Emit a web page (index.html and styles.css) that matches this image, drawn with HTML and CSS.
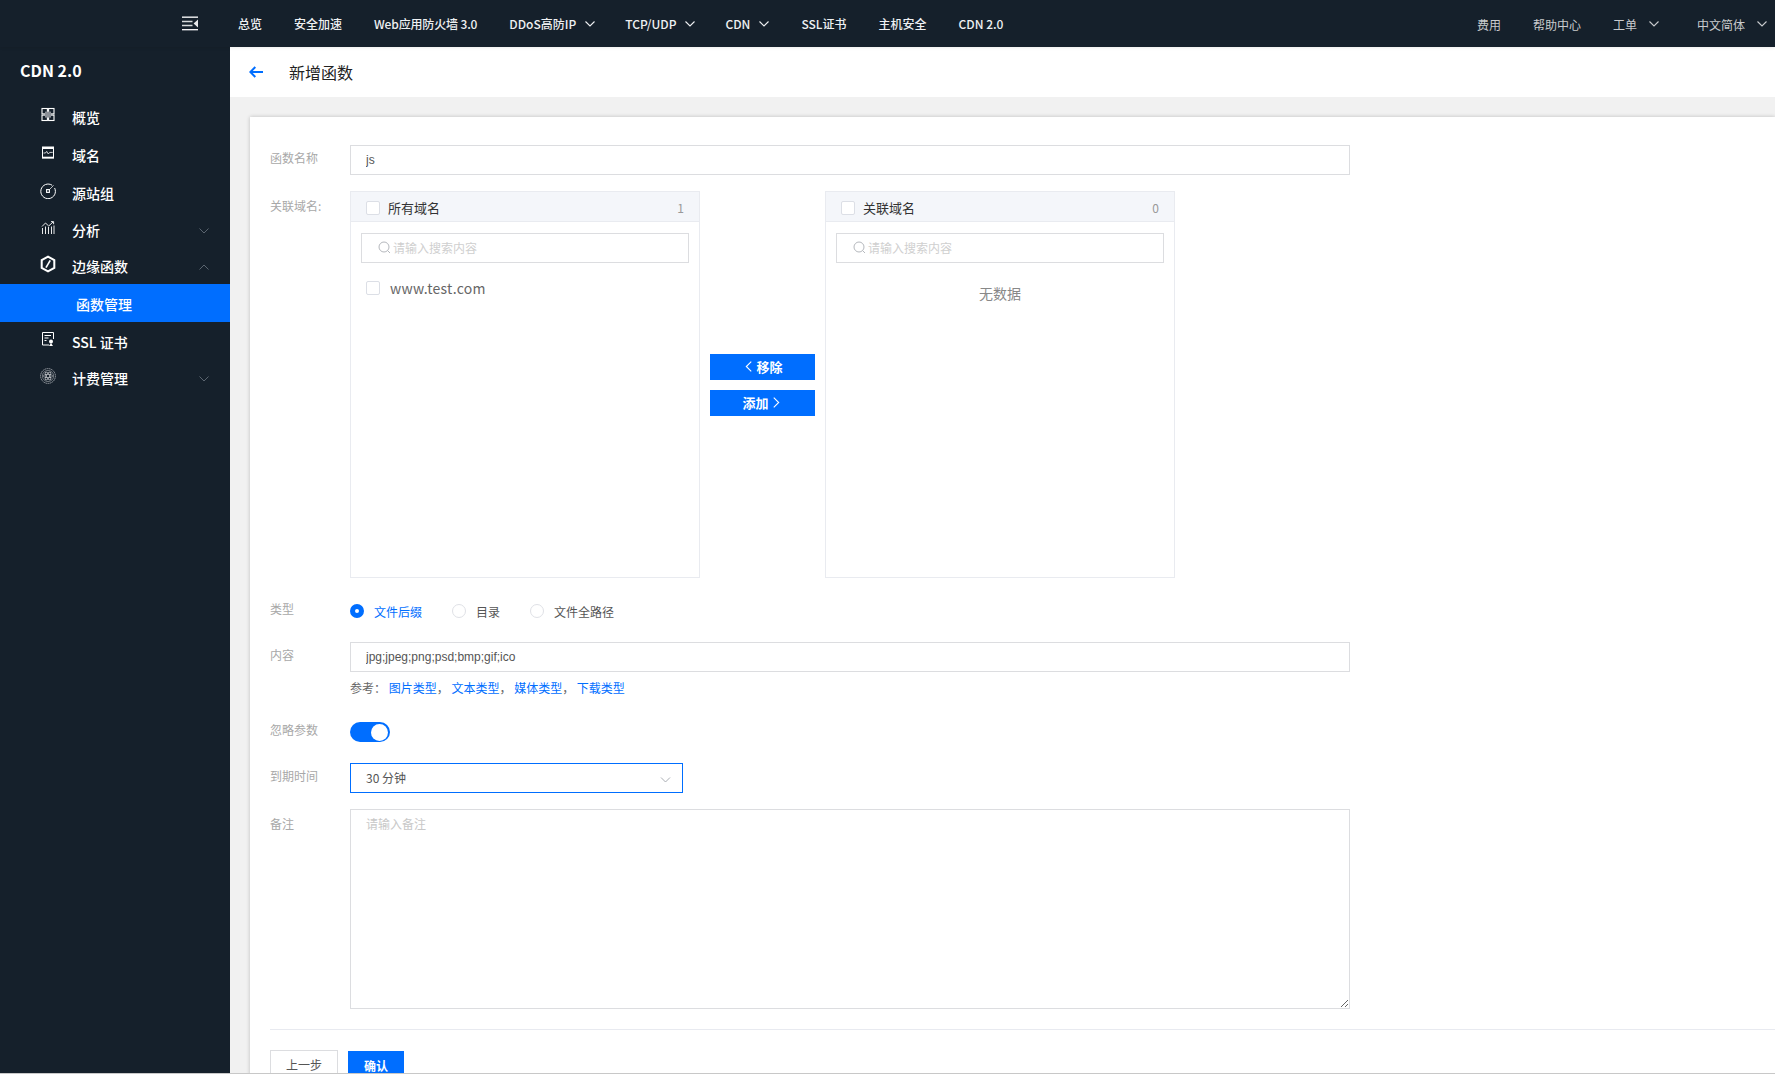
FILE: index.html
```html
<!doctype html>
<html lang="zh-CN">
<head>
  <meta charset="UTF-8">
  <title>新增函数</title>
  <link rel="stylesheet" href="styles.css">
</head>
<body>
  <div class="app">
    <header class="topbar">
      <div class="topbar-toggle">
        <svg width="16" height="15" viewBox="0 0 16 15" fill="none" stroke="#d8dadc"><path d="M0 1.2h16" stroke-width="1.6"/><path d="M0 5.5h10.5M0 9.5h10.5" stroke-width="1.3"/><path d="M0 13.7h16" stroke-width="1.3" stroke="#fff"/><path d="M16 3.6v7.8L11.6 7.5z" fill="#e8e9eb" stroke="none"/></svg>
      </div>
      <nav class="topnav">
        <a>总览</a>
        <a>安全加速</a>
        <a class="tight">Web应用防火墙 3.0</a>
        <a>DDoS高防IP<svg class="caret" viewBox="0 0 10 6"><path d="M.5.5 5 5 9.5.5"/></svg></a>
        <a>TCP/UDP<svg class="caret" viewBox="0 0 10 6"><path d="M.5.5 5 5 9.5.5"/></svg></a>
        <a class="nav-cdn">CDN<svg class="caret" viewBox="0 0 10 6"><path d="M.5.5 5 5 9.5.5"/></svg></a>
        <a>SSL证书</a>
        <a>主机安全</a>
        <a>CDN 2.0</a>
      </nav>
      <nav class="topnav-right">
        <a>费用</a>
        <a>帮助中心</a>
        <a class="wide">工单<svg class="caret" viewBox="0 0 10 6"><path d="M.5.5 5 5 9.5.5"/></svg></a>
        <a>中文简体<svg class="caret" viewBox="0 0 10 6"><path d="M.5.5 5 5 9.5.5"/></svg></a>
      </nav>
    </header>

    <div class="body-wrap">
      <aside class="sidebar">
        <div class="side-title">CDN 2.0</div>
        <ul class="side-menu">
          <li class="side-item">
            <svg class="side-icon" viewBox="0 0 16 16" fill="none" stroke="#fff" stroke-width="1.1"><rect x="2" y="1.5" width="5.4" height="5.4"/><rect x="8.6" y="1.5" width="5.4" height="5.4"/><rect x="2" y="8.1" width="5.4" height="5.4"/><rect x="8.6" y="8.1" width="5.4" height="5.4"/><rect x="5" y="4.6" width="6" height="6" fill="#8a8f96" stroke="none"/></svg>
            <span>概览</span>
          </li>
          <li class="side-item">
            <svg class="side-icon" viewBox="0 0 16 16" fill="none" stroke="#fff"><rect x="2.5" y="2" width="11" height="11" stroke-width="1"/><path d="M2 3h12" stroke-width="2"/><path d="M2 12.5h12" stroke-width="1.6"/><path d="M3.5 8h2l1.2-1.6 1.6 2.6 1.4-1.6h3" stroke-width=".8"/></svg>
            <span>域名</span>
          </li>
          <li class="side-item">
            <svg class="side-icon" viewBox="0 0 16 16" fill="none" stroke="#fff" stroke-width="1"><path d="M12.2 2.3A7.3 7.3 0 1 0 14.6 5"/><rect x="6.6" y="6.6" width="2.8" height="2.8" stroke-width="1.1"/><path d="M9.4 6.6 13.6 2.4" stroke-width=".7"/></svg>
            <span>源站组</span>
          </li>
          <li class="side-item side-sub">
            <svg class="side-icon" viewBox="0 0 16 16" fill="none" stroke="#fff" stroke-width=".9"><path d="M2.5 14V8M5.5 14V6.5M8.5 14V7M11.5 14V6.5M14 14V5.5"/><path d="M2 6.5 5.5 3l3.2 3L13 2"/><path d="M11 1.6h2.6v2.6"/></svg>
            <span>分析</span>
            <svg class="side-caret" viewBox="0 0 10 6"><path d="M.5.5 5 5 9.5.5"/></svg>
          </li>
          <li class="side-item side-sub">
            <svg class="side-icon side-icon-big" viewBox="0 0 16 16" fill="none" stroke="#fff"><path d="M8 1.4 13.6 4.6v6.8L8 14.6 2.4 11.4V4.6z" stroke-width="1.8"/><path d="M10 4.8 6.2 11.2" stroke-width="1.5"/></svg>
            <span>边缘函数</span>
            <svg class="side-caret" viewBox="0 0 10 6"><path d="M.5 5.5 5 1l4.5 4.5"/></svg>
          </li>
          <li class="side-child">函数管理</li>
          <li class="side-item side-cert">
            <svg class="side-icon" viewBox="0 0 16 16" fill="none" stroke="#fff" stroke-width="1"><path d="M9 14H2.5V1.5h11V8"/><path d="M4.5 4.5h6.5M4.5 7h4M4.5 9.5h2"/><circle cx="11" cy="10.5" r="2" fill="#fff" stroke="none"/><path d="M9 15l2-3 2 3z" fill="#fff" stroke="none"/></svg>
            <span>SSL 证书</span>
          </li>
          <li class="side-item side-sub">
            <svg class="side-icon" viewBox="0 0 16 16" fill="none" stroke="#c6c9cd" stroke-width=".7"><circle cx="8" cy="8" r="7.4" stroke-dasharray="1.6 .5"/><circle cx="8" cy="8" r="5.6" stroke-width=".5"/><ellipse cx="8" cy="8" rx="4.6" ry="1.7"/><ellipse cx="8" cy="8" rx="4.6" ry="1.7" transform="rotate(60 8 8)"/><ellipse cx="8" cy="8" rx="4.6" ry="1.7" transform="rotate(120 8 8)"/></svg>
            <span>计费管理</span>
            <svg class="side-caret" viewBox="0 0 10 6"><path d="M.5.5 5 5 9.5.5"/></svg>
          </li>
        </ul>
      </aside>

      <main class="main">
        <div class="page-head">
          <svg class="back-arrow" width="14" height="12" viewBox="0 0 14 12" fill="none" stroke="#006eff" stroke-width="2"><path d="M14 6H1.5M6.3 1 1.3 6l5 5"/></svg>
          <h1>新增函数</h1>
        </div>
        <div class="card">
          <div class="form-row">
            <label class="form-label">函数名称</label>
            <input class="text-input" type="text" value="js">
          </div>

          <div class="form-row transfer-row">
            <label class="form-label label-low">关联域名:</label>
            <div class="transfer">
              <div class="panel">
                <div class="panel-head">
                  <span class="check"></span>
                  <span class="panel-title">所有域名</span>
                  <span class="panel-count">1</span>
                </div>
                <div class="panel-search">
                  <svg width="13" height="13" viewBox="0 0 13 13" fill="none" stroke="#b5b8bd"><circle cx="6" cy="6" r="5"/><path d="M9.6 9.6 12 12"/></svg>
                  <span>请输入搜索内容</span>
                </div>
                <div class="panel-item">
                  <span class="check"></span>
                  <span class="item-text">www.test.com</span>
                </div>
              </div>
              <div class="transfer-actions">
                <button class="btn-move btn-left"><svg class="move-arrow" viewBox="0 0 6 10"><path d="M5.5.5 1 5l4.5 4.5"/></svg>移除</button>
                <button class="btn-move btn-right">添加<svg class="move-arrow" viewBox="0 0 6 10"><path d="M.5.5 5 5 .5 9.5"/></svg></button>
              </div>
              <div class="panel">
                <div class="panel-head">
                  <span class="check"></span>
                  <span class="panel-title">关联域名</span>
                  <span class="panel-count">0</span>
                </div>
                <div class="panel-search">
                  <svg width="13" height="13" viewBox="0 0 13 13" fill="none" stroke="#b5b8bd"><circle cx="6" cy="6" r="5"/><path d="M9.6 9.6 12 12"/></svg>
                  <span>请输入搜索内容</span>
                </div>
                <div class="panel-empty">无数据</div>
              </div>
            </div>
          </div>

          <div class="form-row radio-row">
            <label class="form-label label-high">类型</label>
            <div class="radios">
              <span class="radio-opt active"><i class="radio"></i>文件后缀</span>
              <span class="radio-opt"><i class="radio"></i>目录</span>
              <span class="radio-opt"><i class="radio"></i>文件全路径</span>
            </div>
          </div>

          <div class="form-row content-row">
            <label class="form-label">内容</label>
            <div class="content-field">
              <input class="text-input" type="text" value="jpg;jpeg;png;psd;bmp;gif;ico">
              <p class="hint">参考： <a>图片类型</a>， <a>文本类型</a>， <a>媒体类型</a>， <a>下载类型</a></p>
            </div>
          </div>

          <div class="form-row toggle-row">
            <label class="form-label label-toggle">忽略参数</label>
            <span class="toggle"><i></i></span>
          </div>

          <div class="form-row">
            <label class="form-label">到期时间</label>
            <div class="select">
              <span>30 分钟</span>
              <svg width="11" height="6" viewBox="0 0 10 6" fill="none" stroke="#a9adb3"><path d="M.5.5 5 5 9.5.5"/></svg>
            </div>
          </div>

          <div class="form-row note-row">
            <label class="form-label label-low">备注</label>
            <textarea class="note" placeholder="请输入备注"></textarea>
          </div>

          <div class="form-foot">
            <button class="btn-plain">上一步</button>
            <button class="btn-primary">确认</button>
          </div>
        </div>
      </main>
    </div>
  </div>
</body>
</html>
```
FILE: styles.css
```css
* {
    box-sizing: border-box;
}
html, body {
    margin: 0;
    height: 100%;
    overflow: hidden;
    background-color: #fff;
}
body {
    font-family: "Noto Sans CJK SC", "Noto Sans", sans-serif;
    font-size: 12px;
    color: #444;
}
.app {
    height: 1074px;
    display: flex;
    flex-direction: column;
    border-bottom: 1px solid #c8c8c8;
    overflow: hidden;
}

/* top bar */
.topbar {
    flex: none;
    height: 47px;
    background-color: #15202b;
    display: flex;
    align-items: center;
    position: relative;
    z-index: 2;
    box-shadow: 0 1px 3px rgba(0,0,0,0.08);
}
.topbar-toggle {
    width: 238px;
    padding-left: 182px;
    display: flex;
    margin-top: -1px;
}
.topnav {
    display: flex;
    gap: 32px;
    font-weight: 500;
    color: #eef0f2;
}
.topnav a, .topnav-right a {
    display: flex;
    align-items: center;
    white-space: nowrap;
}
.topnav a.tight {
    letter-spacing: -0.15px;
}
.caret {
    width: 10px;
    height: 6px;
    margin-left: 9px;
    fill: none;
    stroke: currentColor;
    stroke-width: 1.1;
}
.topnav .caret {
    margin-right: -2px;
}
.topnav .nav-cdn .caret {
    margin-right: 0;
}
.topnav-right {
    margin-left: auto;
    display: flex;
    gap: 32px;
    color: #c9cbce;
    padding-right: 8px;
    margin-top: 2px;
}
.topnav-right a.wide {
    margin-right: 6px;
}
.topnav-right .caret {
    margin-left: 12px;
    margin-top: -2px;
}

.body-wrap {
    flex: 1;
    min-height: 0;
    display: flex;
}

/* sidebar */
.sidebar {
    flex: none;
    width: 230px;
    background-color: #15202b;
    color: #fff;
}
.side-title {
    padding-left: 20px;
    font-size: 16px;
    font-weight: 700;
    line-height: 24px;
    margin-top: 11px;
}
.side-menu {
    list-style: none;
    margin: 16px 0 0;
    padding: 0;
    font-size: 14px;
    font-weight: 500;
}
.side-item {
    position: relative;
    height: 38px;
    display: flex;
    align-items: center;
    padding-left: 72px;
}
.side-sub {
    height: 36px;
}
.side-cert {
    padding-top: 2px;
}
.side-icon {
    position: absolute;
    left: 40px;
    top: 50%;
    width: 16px;
    height: 16px;
    margin-top: -10px;
}
.side-icon-big {
    left: 39px;
    width: 18px;
    height: 18px;
    margin-top: -11px;
}
.side-caret {
    position: absolute;
    right: 21px;
    top: 50%;
    margin-top: -2px;
    width: 10px;
    height: 6px;
    fill: none;
    stroke: #5b6570;
    stroke-width: 1;
}
.side-child {
    height: 38px;
    line-height: 38px;
    padding: 1px 0 0 76px;
    background-color: #006eff;
}

/* main area */
.main {
    flex: 1;
    min-width: 0;
    background-color: #f1f1f1;
    overflow: hidden;
}
.page-head {
    height: 50px;
    background-color: #fff;
    display: flex;
    align-items: center;
    padding-left: 19px;
}
.page-head h1 {
    margin: 0 0 0 26px;
    font-size: 16px;
    font-weight: 400;
    color: #222;
}
.card {
    margin: 20px 0 0 20px;
    background-color: #fff;
    padding: 28px 0 0 20px;
    height: 1000px;
    box-shadow: 0 0 4px rgba(0,0,0,0.22);
}

/* form */
.form-row {
    display: flex;
    align-items: flex-start;
    margin-bottom: 16px;
}
.form-label {
    flex: none;
    width: 80px;
    line-height: 26px;
    color: #a8a8a8;
}
.label-low {
    line-height: 30px;
}
.label-high {
    line-height: 24px;
}
.label-toggle {
    line-height: 16px;
}
.text-input {
    display: block;
    width: 1000px;
    height: 30px;
    border: 1px solid #dcdde0;
    padding: 0 15px;
    font-family: "Liberation Sans", Arial, sans-serif;
    font-size: 12px;
    color: #555;
    outline: none;
}

/* transfer */
.transfer-row {
    margin-bottom: 19px;
}
.transfer {
    display: flex;
    align-items: stretch;
}
.panel {
    width: 350px;
    height: 387px;
    border: 1px solid #e9ebf0;
}
.panel-head {
    height: 30px;
    background-color: #f4f6fa;
    border-bottom: 1px solid #e9ebf0;
    display: flex;
    align-items: center;
    padding: 2px 15px 0;
    margin-bottom: 11px;
}
.check {
    flex: none;
    width: 14px;
    height: 14px;
    background-color: #fff;
    border: 1px solid #dcdfe6;
    border-radius: 2px;
}
.panel-title {
    margin-left: 8px;
    font-size: 13px;
    color: #333;
}
.panel-count {
    margin-left: auto;
    color: #999;
    font-size: 12px;
}
.panel-search {
    height: 30px;
    margin: 0 10px;
    border: 1px solid #dcdde0;
    display: flex;
    align-items: center;
    padding: 0 0 2px 16px;
    color: #cfcfcf;
}
.panel-search span {
    margin-left: 2px;
}
.panel-item {
    display: flex;
    align-items: center;
    padding-left: 15px;
    margin-top: 15px;
}
.item-text {
    margin-left: 10px;
    font-size: 14px;
    letter-spacing: 0.25px;
    color: #666;
    line-height: 20px;
}
.panel-empty {
    margin-top: 20px;
    text-align: center;
    font-size: 14px;
    color: #888;
    line-height: 20px;
}
.transfer-actions {
    width: 125px;
    display: flex;
    flex-direction: column;
    align-items: center;
    justify-content: center;
    gap: 10px;
}
.btn-move {
    width: 105px;
    height: 26px;
    border: none;
    background-color: #006eff;
    color: #fff;
    font-family: inherit;
    font-size: 13px;
    font-weight: 700;
    display: flex;
    align-items: center;
    justify-content: center;
    gap: 4px;
    padding: 0;
}
.btn-left {
    padding-left: 3px;
}
.btn-right {
    padding-right: 3px;
}
.move-arrow {
    width: 7px;
    height: 11px;
    fill: none;
    stroke: #fff;
    stroke-width: 1;
}

/* radios */
.radio-row {
    height: 30px;
    margin-bottom: 15px;
}
.radios {
    display: flex;
    align-items: center;
    height: 28px;
    gap: 30px;
    color: #555;
}
.radio-opt {
    display: flex;
    align-items: center;
    gap: 10px;
}
.radio {
    width: 14px;
    height: 14px;
    border: 1px solid #dfe1e6;
    border-radius: 50%;
    background-color: #fff;
}
.radio-opt.active {
    color: #006eff;
}
.radio-opt.active .radio {
    border: 5px solid #006eff;
}

.content-row {
    margin-bottom: 25px;
}
.hint {
    margin: 7px 0 0;
    line-height: 18px;
    color: #666;
}
.hint a {
    color: #006eff;
}
.toggle-row {
    margin-bottom: 21px;
}
.toggle {
    width: 40px;
    height: 20px;
    border-radius: 10px;
    background-color: #006eff;
    display: flex;
    align-items: center;
    justify-content: flex-end;
    padding-right: 2px;
}
.toggle i {
    width: 17px;
    height: 17px;
    border-radius: 50%;
    background-color: #fff;
}
.select {
    width: 333px;
    height: 30px;
    border: 1px solid #006eff;
    display: flex;
    align-items: center;
    justify-content: space-between;
    padding: 0 11px 2px 15px;
    color: #555;
}
.select svg {
    margin-top: 5px;
}
.note-row {
    margin-bottom: 20px;
}
.note {
    display: block;
    width: 1000px;
    height: 200px;
    border: 1px solid #dcdde0;
    padding: 5px 15px;
    font-family: inherit;
    font-size: 12px;
    line-height: 18px;
    outline: none;
}
.note::placeholder {
    color: #c8c8c8;
}
.form-foot {
    border-top: 1px solid #e8eaf0;
    padding-top: 20px;
    display: flex;
    align-items: flex-start;
    gap: 10px;
}
.btn-plain, .btn-primary {
    font-family: inherit;
    font-size: 12px;
    height: 30px;
    padding: 0 0 2px;
    border: 1px solid #dcdde0;
    background-color: #fff;
    color: #555;
}
.btn-plain {
    width: 68px;
}
.btn-primary {
    width: 56px;
    margin-top: 1px;
    border: none;
    background-color: #006eff;
    color: #fff;
    font-weight: 700;
}
```
